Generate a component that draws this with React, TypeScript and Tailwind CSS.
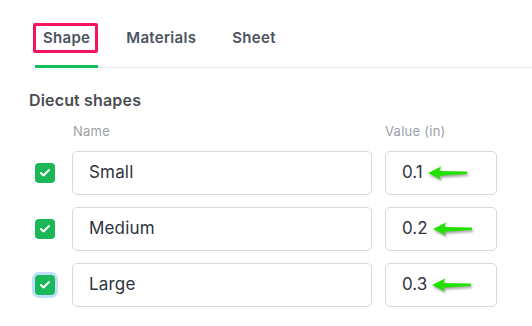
import { Check } from 'lucide-react'

const tabs = ['Shape', 'Materials', 'Sheet']

const shapes = [
  { name: 'Small', value: '0.1', focused: false },
  { name: 'Medium', value: '0.2', focused: false },
  { name: 'Large', value: '0.3', focused: true },
]

function Arrow() {
  return (
    <svg
      width="40"
      height="14"
      viewBox="0 0 40 14"
      className="ml-[5px] drop-shadow-[1px_2px_1px_rgba(0,0,0,0.35)]"
    >
      <path d="M0 7 L13 0.5 L11.5 5 L39 5.4 L39 8 L11.5 9.7 L13 13.5 Z" fill="#22e000" />
    </svg>
  )
}

export default function App() {
  return (
    <div
      className="w-[532px] h-[326px] bg-white overflow-hidden"
      style={{ fontFamily: 'Inter, "Open Sans", sans-serif' }}
    >
      {/* tabs */}
      <div className="ml-[35px] pt-[24px] flex gap-[20px] border-b border-[#e8eaed]">
        {tabs.map((tab, i) => (
          <div
            key={tab}
            className={
              i === 0
                ? 'relative px-[8px] pb-[13px] -mb-px border-b-[3px] border-[#12bf5b] text-[15px] leading-[28px] tracking-[0.02em] font-semibold text-[#4b5361]'
                : 'relative px-[8px] pb-[13px] -mb-px border-b-[3px] border-transparent text-[15px] leading-[28px] tracking-[0.02em] font-semibold text-[#4b5361]'
            }
          >
            {tab}
            {i === 0 && (
              <div className="absolute -left-[2px] right-0 -top-[1px] h-[30px] border-[3px] border-[#f2145c] rounded-[2px]" />
            )}
          </div>
        ))}
      </div>

      <div className="ml-[29px] mt-[22px] text-[16px] leading-5 tracking-[0.01em] font-semibold text-[#4a4d52]">
        Diecut shapes
      </div>

      <div className="mt-[13px] flex text-[13px] leading-4 tracking-[0.02em] text-[#9aa0a6]">
        <div className="ml-[73px] w-[312px]">Name</div>
        <div>Value (in)</div>
      </div>

      <div className="mt-[12px] flex flex-col gap-[12px]">
        {shapes.map((s) => (
          <div key={s.name} className="flex items-center">
            <div className="ml-[35px] w-[37px]">
              <div
                className={
                  s.focused
                    ? 'w-[20px] h-[20px] rounded-[4px] bg-[#1bb85a] flex items-center justify-center ring-[3px] ring-[#c3defb]'
                    : 'w-[20px] h-[20px] rounded-[4px] bg-[#1bb85a] flex items-center justify-center'
                }
              >
                <Check size={12} strokeWidth={4} className="text-white" />
              </div>
            </div>
            <div className="w-[300px] h-[44px] rounded-[5px] border border-[#d5d9e0] flex items-center pl-[16px] text-[17px] tracking-[0.01em] text-[#2d3440]">
              {s.name}
            </div>
            <div className="ml-[13px] w-[112px] h-[44px] rounded-[5px] border border-[#d5d9e0] flex items-center pl-[16px] text-[17px] text-[#2d3440]">
              {s.value}
              <Arrow />
            </div>
          </div>
        ))}
      </div>
    </div>
  )
}
